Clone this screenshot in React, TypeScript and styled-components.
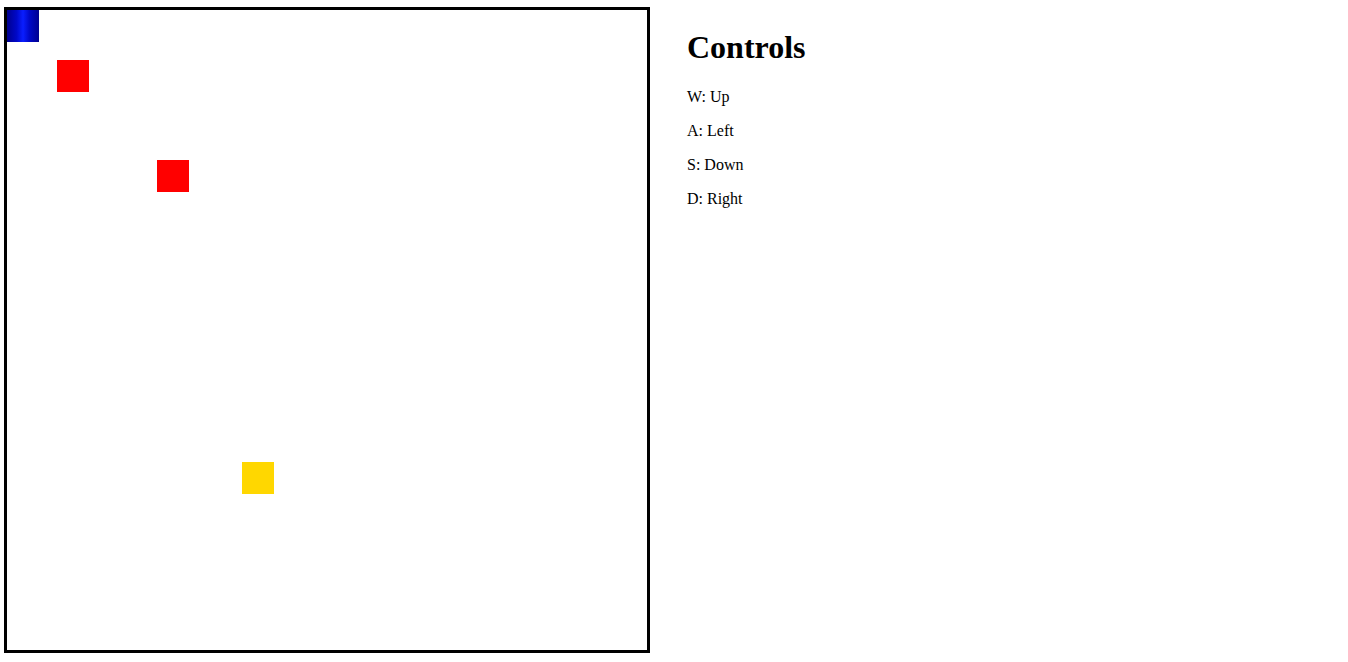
import styled, { createGlobalStyle } from "styled-components";

const GlobalStyle = createGlobalStyle`
  body {
    margin: 0;
    background: #ffffff;
    font-family: "Liberation Serif", "Times New Roman", serif;
    color: #000000;
  }
`;

const Page = styled.div`
  display: flex;
  align-items: flex-start;
  gap: 37px;
  padding: 7px 0 0 4px;
`;

const Board = styled.div`
  position: relative;
  width: 640px;
  height: 640px;
  border: 3px solid #000000;
  flex-shrink: 0;
`;

const Tile = styled.div<{ $kind: "player" | "enemy" | "goal" }>`
  position: absolute;
  width: 32px;
  height: 32px;
  background: ${({ $kind }) =>
    $kind === "player"
      ? "linear-gradient(to right, #000090 0%, #0008c8 30%, #0a1eff 50%, #0008c8 70%, #000090 100%)"
      : $kind === "enemy"
      ? "#ff0000"
      : "#ffd700"};
`;

const Controls = styled.div`
  display: flex;
  flex-direction: column;
  padding-top: 1px;
`;

const Title = styled.h1`
  font-size: 32px;
  font-weight: bold;
  margin: 21.44px 0;
`;

const Hint = styled.p`
  font-size: 16px;
  margin: 0 0 16px;
`;

const tiles: { kind: "player" | "enemy" | "goal"; x: number; y: number }[] = [
  { kind: "player", x: 0, y: 0 },
  { kind: "enemy", x: 50, y: 50 },
  { kind: "enemy", x: 150, y: 150 },
  { kind: "goal", x: 235, y: 452 },
];

const hints = ["W: Up", "A: Left", "S: Down", "D: Right"];

const App = () => {
  return (
    <>
      <GlobalStyle />
      <Page>
        <Board>
          {tiles.map((t, i) => (
            <Tile key={i} $kind={t.kind} style={{ left: t.x, top: t.y }} />
          ))}
        </Board>
        <Controls>
          <Title>Controls</Title>
          {hints.map((h) => (
            <Hint key={h}>{h}</Hint>
          ))}
        </Controls>
      </Page>
    </>
  );
};

export default App;
